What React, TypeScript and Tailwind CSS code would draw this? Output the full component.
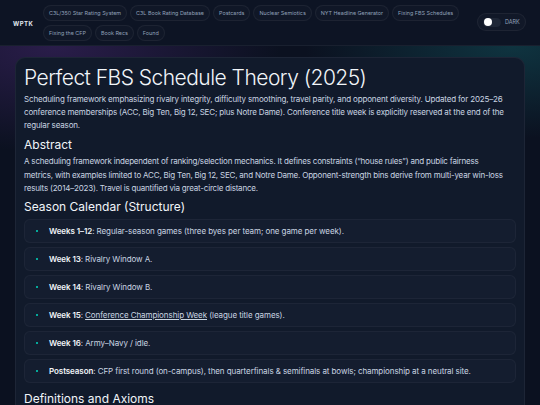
import React from 'react';

const navRow1 = [
  'C3L/350 Star Rating System',
  'C3L Book Rating Database',
  'Postcards',
  'Nuclear Semiotics',
  'NYT Headline Generator',
  'Fixing FBS Schedules',
];
const navRow2 = ['Fixing the CFP', 'Book Recs', 'Found'];

const calendar: { label: string; text: React.ReactNode }[] = [
  { label: 'Weeks 1–12', text: 'Regular-season games (three byes per team; one game per week).' },
  { label: 'Week 13', text: 'Rivalry Window A.' },
  { label: 'Week 14', text: 'Rivalry Window B.' },
  {
    label: 'Week 15',
    text: (
      <>
        <span className="underline">Conference Championship Week</span> (league title games).
      </>
    ),
  },
  { label: 'Week 16', text: 'Army–Navy / idle.' },
  {
    label: 'Postseason',
    text: 'CFP first round (on-campus), then quarterfinals & semifinals at bowls; championship at a neutral site.',
  },
];

function NavPill({ children }: { children: React.ReactNode }) {
  return (
    <a className="h-4 px-[5px] flex items-center rounded-full border border-white/5 bg-white/[0.015] text-[5.4px] text-slate-400 whitespace-nowrap">
      {children}
    </a>
  );
}

export default function App() {
  return (
    <div
      className="min-h-screen w-full bg-[#0b1120] text-slate-300 overflow-hidden"
      style={{ fontFamily: 'Inter, "Noto Sans", sans-serif' }}
    >
      {/* top bar */}
      <header className="h-[46px] bg-[#0d1424] border-b border-white/5 flex items-start pl-[13px] pr-[14px]">
        <div className="mt-[19px] w-[30px] text-[6px] font-bold tracking-[0.08em] text-slate-200">WPTK</div>
        <nav className="flex flex-col gap-1 mt-[5px]">
          <div className="flex gap-[3px]">
            {navRow1.map((n) => (
              <NavPill key={n}>{n}</NavPill>
            ))}
          </div>
          <div className="flex gap-[3px]">
            {navRow2.map((n) => (
              <NavPill key={n}>{n}</NavPill>
            ))}
          </div>
        </nav>
        <div className="ml-auto mt-[13px] h-[18px] w-[49px] rounded-full border border-white/5 bg-white/[0.02] flex items-center pl-[5px] gap-[4px]">
          <div className="w-[18px] h-[9px] rounded-full bg-[#1e2636] flex items-center pl-[1px]">
            <div className="w-[8px] h-[8px] rounded-full bg-white" />
          </div>
          <span className="text-[5.5px] text-slate-400">DARK</span>
        </div>
      </header>

      {/* page body with glow */}
      <div className="relative pt-[11px] px-[15px] bg-[radial-gradient(ellipse_60%_40%_at_10%_0%,#2a1d4a_0%,transparent_70%),radial-gradient(ellipse_55%_35%_at_95%_0%,#0f3440_0%,transparent_70%)]">
        <main className="rounded-[10px] bg-[#111a2b] border border-white/5 px-2 pt-[7px] pb-4">
          <h1 className="text-[21px] leading-[26px] font-light tracking-tight text-slate-100">
            Perfect FBS Schedule Theory (2025)
          </h1>
          <p className="mt-[2px] text-[8px] leading-[13px] text-slate-300 tracking-[-0.02em]">
            Scheduling framework emphasizing rivalry integrity, difficulty smoothing, travel parity, and opponent
            diversity. Updated for 2025–26 conference memberships (ACC, Big Ten, Big 12, SEC; plus Notre Dame).
            Conference title week is explicitly reserved at the end of the regular season.
          </p>

          <h2 className="mt-[5px] text-[12px] leading-[16px] text-slate-100">Abstract</h2>
          <p className="mt-[2px] text-[8px] leading-[13.5px] text-slate-300 tracking-[-0.025em]">
            A scheduling framework independent of ranking/selection mechanics. It defines constraints (“house rules”)
            and public fairness
            <br />
            metrics, with examples limited to ACC, Big Ten, Big 12, SEC, and Notre Dame. Opponent-strength bins derive
            from multi-year win-loss results (2014–2023). Travel is quantified via great-circle distance.
          </p>

          <h2 className="mt-[3px] text-[12px] leading-[16px] text-slate-100">Season Calendar (Structure)</h2>
          <ul className="mt-[4px] flex flex-col gap-[4px]">
            {calendar.map((c) => (
              <li
                key={c.label}
                className="h-[24px] flex items-center rounded-[6px] border border-white/[0.04] bg-[#141d2f] pl-[11px] pr-2 text-[8px] text-slate-300 tracking-[-0.01em]"
              >
                <span className="w-[2px] h-[2px] rounded-full bg-teal-400 mr-[11px]" />
                <span>
                  <strong className="font-semibold text-slate-100">{c.label}</strong>: {c.text}
                </span>
              </li>
            ))}
          </ul>

          <h2 className="mt-[8px] text-[12px] leading-[16px] text-slate-100">Definitions and Axioms</h2>
        </main>
      </div>
    </div>
  );
}
